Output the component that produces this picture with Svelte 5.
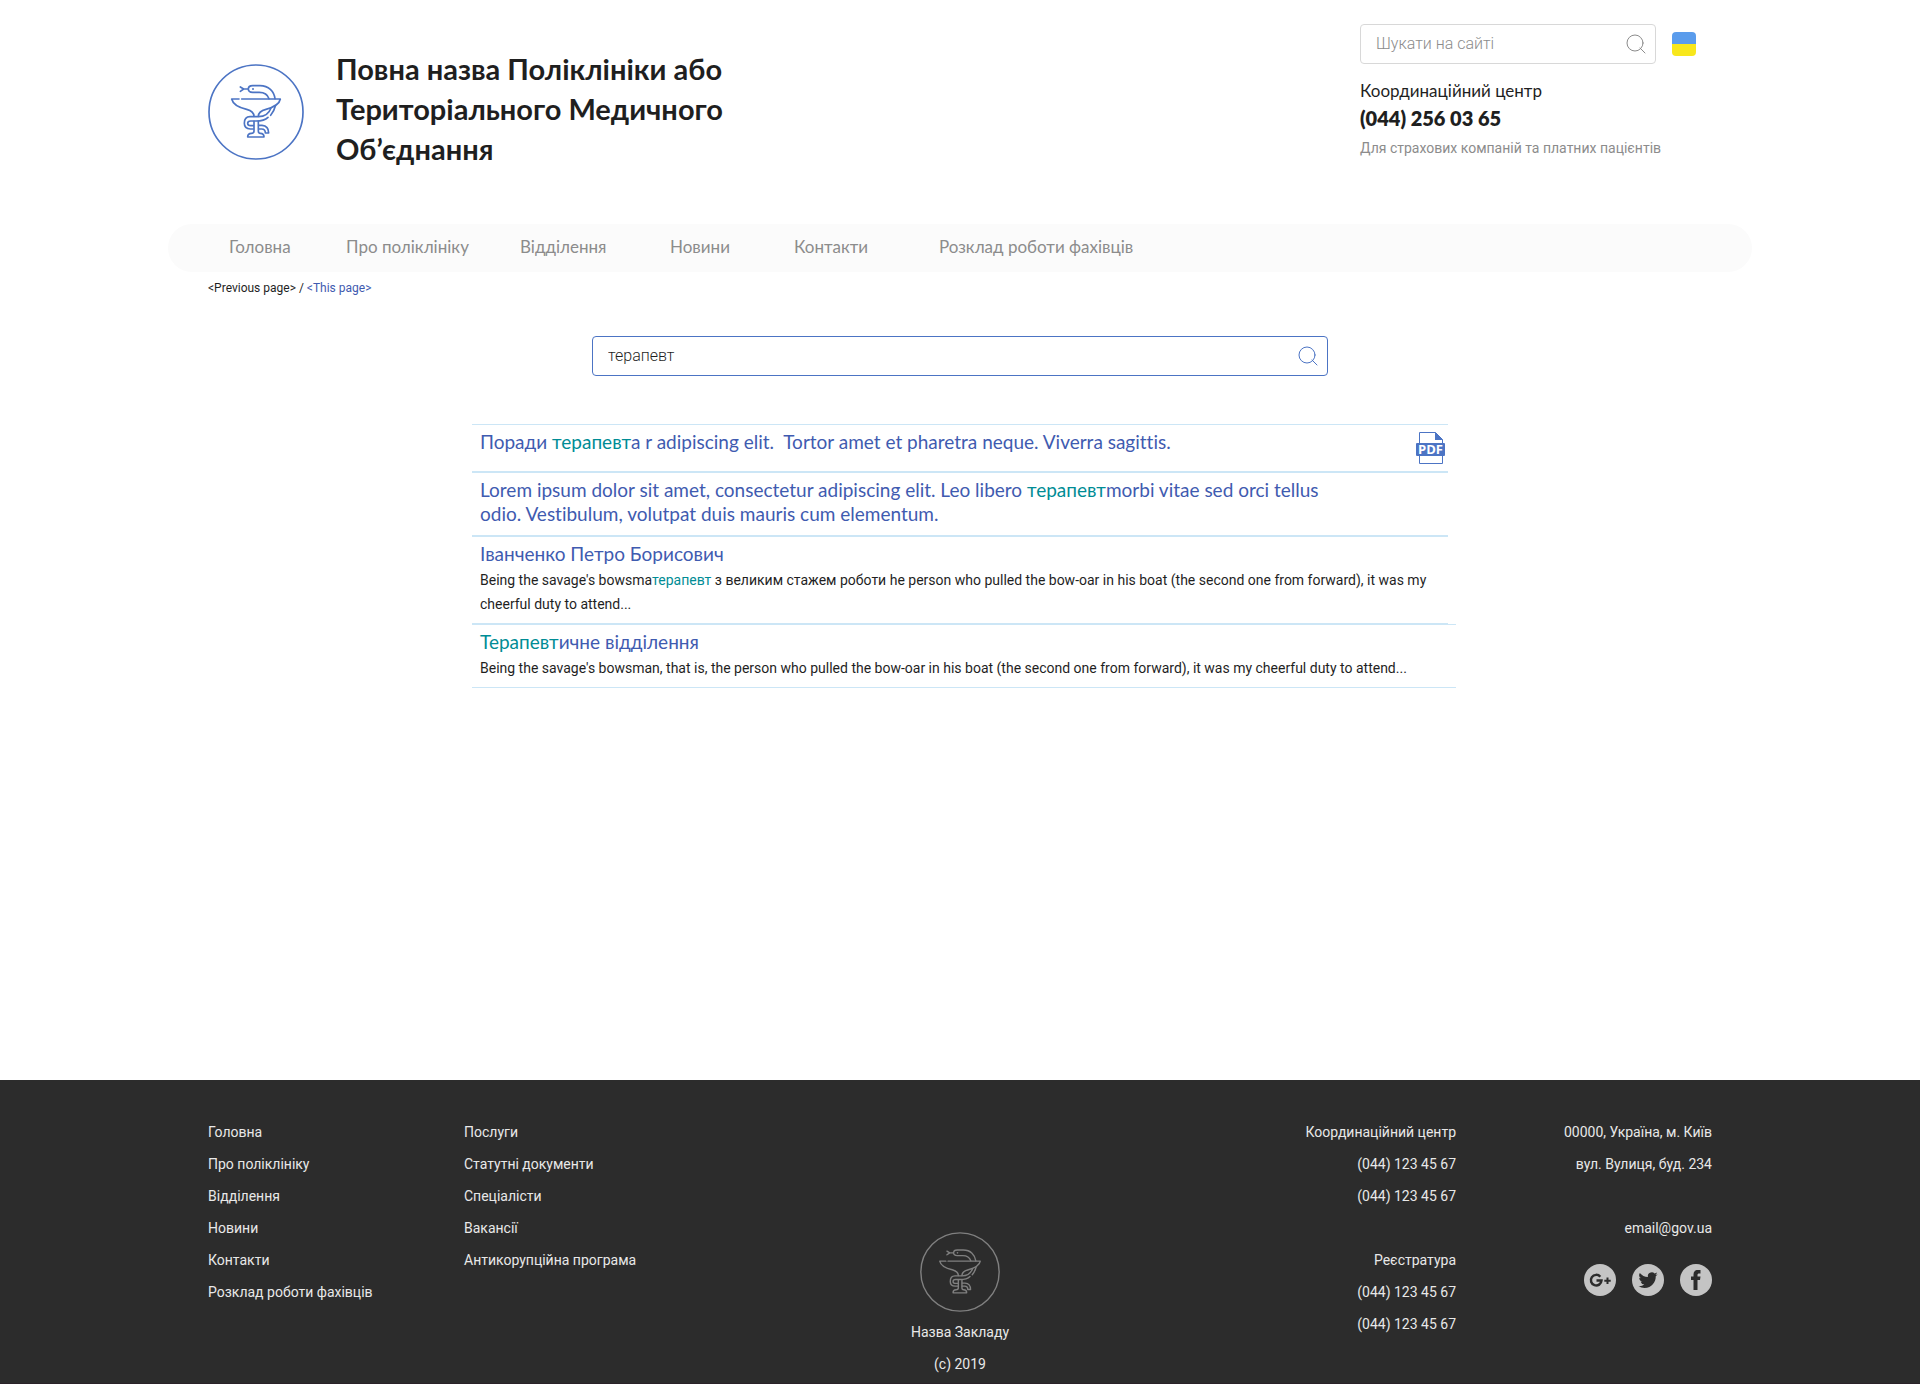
<script>
  const nav = ['Головна', 'Про поліклініку', 'Відділення', 'Новини', 'Контакти', 'Розклад роботи фахівців'];
  const services = ['Послуги', 'Статутні документи', 'Спеціалісти', 'Вакансії', 'Антикорупційна програма'];
  let siteQuery = $state('');
  let query = $state('терапевт');
</script>

{#snippet emblem()}
  <svg class="emblem" viewBox="24 24 288 288" aria-hidden="true">
    <g fill="none" stroke="currentColor" stroke-width="5" stroke-linecap="round" stroke-linejoin="round">
      <circle cx="168" cy="168" r="141" />
      <path d="M121 93L131 99H144M121 106L131 99" />
      <path d="M207 128C203 116 192 109 178 109H158C149 109 145 105 145 99C145 92 150 89 158 89H180C206 89 222 106 225 128" />
      <path d="M117 129H95C99 146 118 155 140 160C155 164 162 169 162 181" />
      <path d="M125 129H241C238 146 220 154 198 160C182 164 175 169 175 181" />
      <path d="M226 150C223 163 217 172 212 178M204 184C195 193 182 195 168 195H152C146 195 143 198 143 202C143 206 146 209 152 209H160" />
      <path d="M213 156C208 170 196 182 175 182H150C138 182 133 191 133 202C133 213 140 219 151 219H160" />
      <path d="M176 208H186C199 209 206 218 206 231H196C196 223 192 219 185 219H176" />
      <path d="M162 196V225C162 230 158 232 154 232C146 232 143 237 143 243H192C192 236 188 232 181 232C177 232 175 229 175 225V196" />
    </g>
    <circle cx="159" cy="99" r="3" fill="currentColor" />
  </svg>
{/snippet}

{#snippet lens()}
  <svg class="lens" viewBox="0 0 20 20" aria-hidden="true">
    <g fill="none" stroke="currentColor" stroke-linecap="round">
      <circle cx="9" cy="9" r="8" /><path d="M14 14l5 5" />
    </g>
  </svg>
{/snippet}

<div class="page">
  <header class="top">
    <a class="home" href="#home" aria-label="Головна">{@render emblem()}</a>
    <h1>Повна назва Поліклініки або Територіального Медичного Об’єднання</h1>
    <div class="contact">
      <div class="tools">
        <form class="search small" role="search">
          <input type="search" aria-label="Шукати на сайті" placeholder="Шукати на сайті" bind:value={siteQuery} />
          <button type="button" aria-label="Шукати">{@render lens()}</button>
        </form>
        <button class="flag" type="button" aria-label="Українська"></button>
      </div>
      <p class="center-name">Координаційний центр</p>
      <a class="phone" href="tel:0442560365">(044) 256 03 65</a>
      <p class="note">Для страхових компаній та платних пацієнтів</p>
    </div>
  </header>

  <nav class="menu" aria-label="Меню">
    {#each nav as item}<a href="#menu">{item}</a>{/each}
  </nav>
  <div class="crumbs"><a href="#previous">&lt;Previous page&gt;</a> / <span>&lt;This page&gt;</span></div>

  <main>
    <form class="search large" role="search">
      <input type="search" aria-label="Пошук" bind:value={query} />
      <button type="button" aria-label="Шукати">{@render lens()}</button>
    </form>

    <section class="results" aria-label="Результати">
      <article class="file">
        <h2><a href="#r1">Поради <mark>терапевт</mark>а r adipiscing elit.&nbsp; Tortor amet et pharetra neque. Viverra sagittis.</a></h2>
        <svg class="pdf" viewBox="0 0 30 32" role="img" aria-label="PDF">
          <path d="M3.500 11V.5H19.500L26.500 7.500V11M3.500 24V31.500H26.500V24" fill="none" stroke="#4c74c4" />
          <path d="M19 0L27 8H19Z" fill="#4c74c4" />
          <rect y="11" width="29" height="13" rx="1" fill="#4c74c4" />
          <text x="14.500" y="22" text-anchor="middle">PDF</text>
        </svg>
      </article>
      <article>
        <h2><a href="#r2">Lorem ipsum dolor sit amet, consectetur adipiscing elit. Leo libero <mark>терапевт</mark>morbi vitae sed orci tellus<br />odio. Vestibulum, volutpat duis mauris cum elementum.</a></h2>
      </article>
      <article>
        <h2><a href="#r3">Іванченко Петро Борисович</a></h2>
        <p>Being the savage's bowsma<mark>терапевт</mark> з великим стажем роботи he person who pulled the bow-oar in his boat (the second one from forward), it was my cheerful duty to attend...</p>
      </article>
      <article class="wide">
        <h2><a href="#r4"><mark>Терапевт</mark>ичне відділення</a></h2>
        <p>Being the savage's bowsman, that is, the person who pulled the bow-oar in his boat (the second one from forward), it was my cheerful duty to attend...</p>
      </article>
    </section>
  </main>

  <footer>
    <div class="foot">
      <ul>{#each nav as item}<li><a href="#menu">{item}</a></li>{/each}</ul>
      <ul>{#each services as item}<li><a href="#services">{item}</a></li>{/each}</ul>
      <div class="brand">
        {@render emblem()}
        <p>Назва Закладу</p>
        <p>(c) 2019</p>
      </div>
      <div class="phones">
        <div>
          <p>Координаційний центр</p>
          <p><a href="tel:0441234567">(044) 123 45 67</a></p>
          <p><a href="tel:0441234567">(044) 123 45 67</a></p>
        </div>
        <div>
          <p>Реєстратура</p>
          <p><a href="tel:0441234567">(044) 123 45 67</a></p>
          <p><a href="tel:0441234567">(044) 123 45 67</a></p>
        </div>
      </div>
      <div class="address">
        <div>
          <p>00000, Україна, м. Київ</p>
          <p>вул. Вулиця, буд. 234</p>
        </div>
        <div>
          <p><a href="mailto:email@gov.ua">email@gov.ua</a></p>
          <div class="social">
            <a href="#google" aria-label="Google+">
              <svg viewBox="0 0 32 32"><circle cx="16" cy="16" r="16" fill="#c4c4c4" />
                <path d="M16.300 12.800A5.300 5.300 0 1 0 17.500 16.500H12.500" fill="none" stroke="#2c2c2c" stroke-width="2.500" />
                <path d="M23.500 13.500V20M20.300 16.700H26.700" stroke="#2c2c2c" stroke-width="2" /></svg>
            </a>
            <a href="#twitter" aria-label="Twitter">
              <svg viewBox="0 0 32 32"><circle cx="16" cy="16" r="16" fill="#c4c4c4" />
                <path transform="translate(6.500 6.500) scale(.8)" fill="#2c2c2c" d="M23.950 4.570a10 10 0 0 1-2.820.77 4.960 4.960 0 0 0 2.160-2.720c-.95.550-2 .960-3.130 1.180a4.920 4.920 0 0 0-8.380 4.480C7.690 8.090 4.070 6.130 1.640 3.160a4.920 4.920 0 0 0 1.520 6.570 4.900 4.900 0 0 1-2.230-.61v.06a4.920 4.920 0 0 0 3.950 4.830 5 5 0 0 1-2.210.08 4.940 4.940 0 0 0 4.600 3.420A9.870 9.870 0 0 1 0 19.540a14 14 0 0 0 7.550 2.210c9.050 0 14-7.500 14-13.980 0-.21 0-.42-.02-.63a9.940 9.940 0 0 0 2.420-2.570z" /></svg>
            </a>
            <a href="#facebook" aria-label="Facebook">
              <svg viewBox="0 0 32 32"><circle cx="16" cy="16" r="16" fill="#c4c4c4" />
                <path fill="#2c2c2c" d="M13.500 26V16H11V12.500H13.500V10.500C13.500 7.500 15 6 18 6H20.500V9.500H19C18 9.500 17.500 10 17.500 11V12.500H20.500L20 16H17.500V26Z" /></svg>
            </a>
          </div>
        </div>
      </div>
    </div>
  </footer>
</div>

<style>
  :global(body) { margin: 0; background: #fff; }
  .page {
    min-height: 100vh;
    display: flex;
    flex-direction: column;
    font: 14px/24px Roboto, sans-serif;
    color: #1f1f1f;
  }
  :where(h1, h2, p, ul) { margin: 0; padding: 0; }
  ul { list-style: none; }
  a { color: inherit; text-decoration: none; }
  svg { display: block; }
  button { padding: 0; border: 0; background: none; color: inherit; cursor: pointer; }
  mark { background: none; color: #008c95; }

  .top, .menu, .crumbs, .foot {
    box-sizing: border-box;
    width: 100%;
    max-width: 1584px;
    margin: 0 auto;
    padding: 0 40px;
  }
  .top { display: flex; align-items: flex-start; padding-top: 24px; min-height: 224px; }
  .emblem { width: 96px; height: 96px; color: #4c74c4; }
  .home { margin: 40px 32px 0 0; }
  h1 {
    width: 400px;
    margin: 0;
    padding-top: 25px;
    font: 700 29px/40px Lato, sans-serif;
  }
  .contact { width: 352px; margin-left: auto; }
  .tools { display: flex; align-items: center; gap: 16px; margin-bottom: 15px; }
  .search {
    display: flex;
    align-items: center;
    box-sizing: border-box;
    height: 40px;
    padding: 0 9px 0 15px;
    border: 1px solid #d8d8d8;
    border-radius: 4px;
    color: #8c8c8c;
  }
  .search input {
    flex: 1;
    min-width: 0;
    padding: 0;
    border: 0;
    outline: 0;
    background: none;
    font: 300 16px/24px Roboto, sans-serif;
    color: #1f1f1f;
  }
  .search input::placeholder { color: #8c8c8c; opacity: 1; }
  .lens { width: 20px; height: 20px; }
  .small { width: 296px; }
  .flag {
    width: 24px;
    height: 24px;
    border-radius: 4px;
    background: linear-gradient(#5a9cec 50%, #f8e71c 50%);
  }
  .center-name { font: 400 17px/24px Lato, sans-serif; }
  .phone { display: block; font: 800 20px/30px Lato, sans-serif; }
  .note { color: #8c8c8c; line-height: 30px; }

  .menu {
    display: grid;
    grid-template-columns: 117px 174px 150px 124px 145px auto;
    justify-content: start;
    padding: 0 40px 2px 61px;
    border-radius: 24px;
    background: #fbfbfb;
    color: #8c8c8c;
    font: 400 17px/46px Lato, sans-serif;
  }
  .crumbs { font-size: 12px; line-height: 32px; }
  .crumbs span { color: #3f5bb0; }

  main { flex: 1; padding: 32px 24px 48px; }
  .large { max-width: 736px; margin: 0 auto 48px; border-color: #4c74c4; color: #4c74c4; }

  .results { max-width: 976px; margin: 0 auto; }
  article {
    box-sizing: border-box;
    padding: 5px 8px 7px;
    border: solid #cce6f6;
    border-width: 1px 0;
  }
  .wide { width: calc(100% + 8px); }
  .file { display: flex; align-items: flex-end; justify-content: space-between; min-height: 48px; padding-right: 2px; }
  .file h2 { align-self: flex-start; }
  h2 {
    margin-bottom: 2px;
    font: 400 19px/24px Lato, sans-serif;
    font-variant-ligatures: none;
    color: #3f5bb0;
  }
  .pdf { width: 30px; height: 32px; }
  .pdf text { font: 700 13px "Open Sans", sans-serif; fill: #fff; }

  footer { background: #2c2c2c; border-bottom: 1px solid #2a2228; color: #e8e8e8; line-height: 32px; }
  .foot {
    display: grid;
    grid-template-columns: 256px 256px 1fr 256px 256px;
    padding-top: 36px;
    padding-bottom: 3px;
  }
  .brand { align-self: end; padding-top: 116px; text-align: center; }
  .brand .emblem { width: 80px; height: 80px; margin: 0 auto 4px; color: #808080; }
  .phones, .address { display: flex; flex-direction: column; gap: 32px; text-align: right; }
  .social { display: flex; justify-content: flex-end; gap: 16px; padding-top: 20px; }
  .social svg { width: 32px; height: 32px; }
</style>
